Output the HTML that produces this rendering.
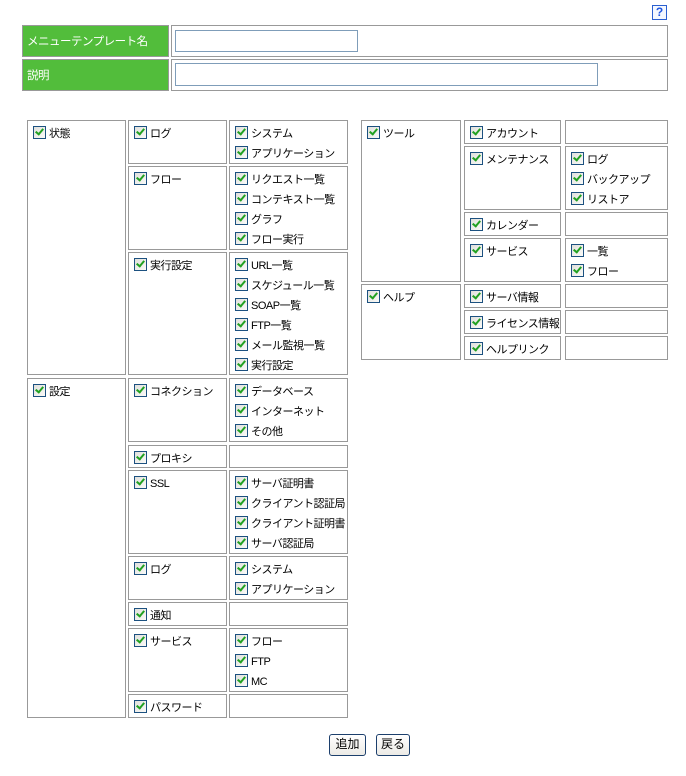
<!DOCTYPE html>
<html><head><meta charset="utf-8"><style>
body{margin:0;width:686px;height:776px;background:#fff;position:relative;font-family:"Liberation Sans","Noto Sans CJK JP",sans-serif;font-size:11px;color:#000;overflow:hidden}
.b{position:absolute;border:1px solid #999;box-sizing:border-box;padding:4px 0 0 5px}
.i{height:20px;line-height:18px;white-space:nowrap;position:relative;padding-left:16px;letter-spacing:-0.5px}
.i:before{content:"";position:absolute;left:0;top:1px;width:11px;height:11px;border:1px solid #1c5180;background:linear-gradient(135deg,#e0e0dc,#fafaf8)}
.i:after{content:"";position:absolute;left:4px;top:2px;width:3px;height:6px;border:solid #21a121;border-width:0 2px 2px 0;transform:rotate(40deg)}
.g{position:absolute;background:#52bd3b;border:1px solid #999;box-sizing:border-box;color:#fff;font-size:11.5px;letter-spacing:-0.5px;padding:7px 0 0 4px}
.v{position:absolute;border:1px solid #999;box-sizing:border-box}
.in{position:absolute;border:1px solid #7f9db9;box-sizing:border-box;background:#fff}
.btn{position:absolute;border:1px solid #1c3f6c;border-radius:3px;background:linear-gradient(#fff,#ecebe6);box-sizing:border-box;text-align:center;line-height:19px;font-size:12px}
</style></head><body>
<div style="position:absolute;left:652px;top:5px;width:13px;height:13px;border:1px solid #2a5fd0;color:#1f56e0;font-weight:bold;font-size:12px;line-height:13px;text-align:center;background:#f4f8ff">?</div>
<div class="g" style="left:22px;top:25px;width:147px;height:32px">メニューテンプレート名</div>
<div class="v" style="left:171px;top:25px;width:497px;height:32px"></div>
<div class="in" style="left:175px;top:30px;width:183px;height:22px"></div>
<div class="g" style="left:22px;top:59px;width:147px;height:32px">説明</div>
<div class="v" style="left:171px;top:59px;width:497px;height:32px"></div>
<div class="in" style="left:175px;top:63px;width:423px;height:23px"></div>

<div class="b" style="left:27px;top:120px;width:99px;height:255px"><div class="i">状態</div></div>
<div class="b" style="left:128px;top:120px;width:99px;height:44px"><div class="i">ログ</div></div>
<div class="b" style="left:229px;top:120px;width:119px;height:44px"><div class="i">システム</div><div class="i">アプリケーション</div></div>
<div class="b" style="left:128px;top:166px;width:99px;height:84px"><div class="i">フロー</div></div>
<div class="b" style="left:229px;top:166px;width:119px;height:84px"><div class="i">リクエスト一覧</div><div class="i">コンテキスト一覧</div><div class="i">グラフ</div><div class="i">フロー実行</div></div>
<div class="b" style="left:128px;top:252px;width:99px;height:123px"><div class="i">実行設定</div></div>
<div class="b" style="left:229px;top:252px;width:119px;height:123px"><div class="i">URL一覧</div><div class="i">スケジュール一覧</div><div class="i">SOAP一覧</div><div class="i">FTP一覧</div><div class="i">メール監視一覧</div><div class="i">実行設定</div></div>

<div class="b" style="left:27px;top:378px;width:99px;height:340px"><div class="i">設定</div></div>
<div class="b" style="left:128px;top:378px;width:99px;height:64px"><div class="i">コネクション</div></div>
<div class="b" style="left:229px;top:378px;width:119px;height:64px"><div class="i">データベース</div><div class="i">インターネット</div><div class="i">その他</div></div>
<div class="b" style="left:128px;top:445px;width:99px;height:23px"><div class="i">プロキシ</div></div>
<div class="b" style="left:229px;top:445px;width:119px;height:23px"></div>
<div class="b" style="left:128px;top:470px;width:99px;height:84px"><div class="i">SSL</div></div>
<div class="b" style="left:229px;top:470px;width:119px;height:84px"><div class="i">サーバ証明書</div><div class="i">クライアント認証局</div><div class="i">クライアント証明書</div><div class="i">サーバ認証局</div></div>
<div class="b" style="left:128px;top:556px;width:99px;height:44px"><div class="i">ログ</div></div>
<div class="b" style="left:229px;top:556px;width:119px;height:44px"><div class="i">システム</div><div class="i">アプリケーション</div></div>
<div class="b" style="left:128px;top:602px;width:99px;height:24px"><div class="i">通知</div></div>
<div class="b" style="left:229px;top:602px;width:119px;height:24px"></div>
<div class="b" style="left:128px;top:628px;width:99px;height:64px"><div class="i">サービス</div></div>
<div class="b" style="left:229px;top:628px;width:119px;height:64px"><div class="i">フロー</div><div class="i">FTP</div><div class="i">MC</div></div>
<div class="b" style="left:128px;top:694px;width:99px;height:24px"><div class="i">パスワード</div></div>
<div class="b" style="left:229px;top:694px;width:119px;height:24px"></div>

<div class="b" style="left:361px;top:120px;width:100px;height:162px"><div class="i">ツール</div></div>
<div class="b" style="left:464px;top:120px;width:97px;height:24px"><div class="i">アカウント</div></div>
<div class="b" style="left:565px;top:120px;width:103px;height:24px"></div>
<div class="b" style="left:464px;top:146px;width:97px;height:64px"><div class="i">メンテナンス</div></div>
<div class="b" style="left:565px;top:146px;width:103px;height:64px"><div class="i">ログ</div><div class="i">バックアップ</div><div class="i">リストア</div></div>
<div class="b" style="left:464px;top:212px;width:97px;height:24px"><div class="i">カレンダー</div></div>
<div class="b" style="left:565px;top:212px;width:103px;height:24px"></div>
<div class="b" style="left:464px;top:238px;width:97px;height:44px"><div class="i">サービス</div></div>
<div class="b" style="left:565px;top:238px;width:103px;height:44px"><div class="i">一覧</div><div class="i">フロー</div></div>
<div class="b" style="left:361px;top:284px;width:100px;height:76px"><div class="i">ヘルプ</div></div>
<div class="b" style="left:464px;top:284px;width:97px;height:24px"><div class="i">サーバ情報</div></div>
<div class="b" style="left:565px;top:284px;width:103px;height:24px"></div>
<div class="b" style="left:464px;top:310px;width:97px;height:24px"><div class="i">ライセンス情報</div></div>
<div class="b" style="left:565px;top:310px;width:103px;height:24px"></div>
<div class="b" style="left:464px;top:336px;width:97px;height:24px"><div class="i">ヘルプリンク</div></div>
<div class="b" style="left:565px;top:336px;width:103px;height:24px"></div>

<div class="btn" style="left:329px;top:734px;width:37px;height:22px">追加</div>
<div class="btn" style="left:376px;top:734px;width:34px;height:22px">戻る</div>
</body></html>
